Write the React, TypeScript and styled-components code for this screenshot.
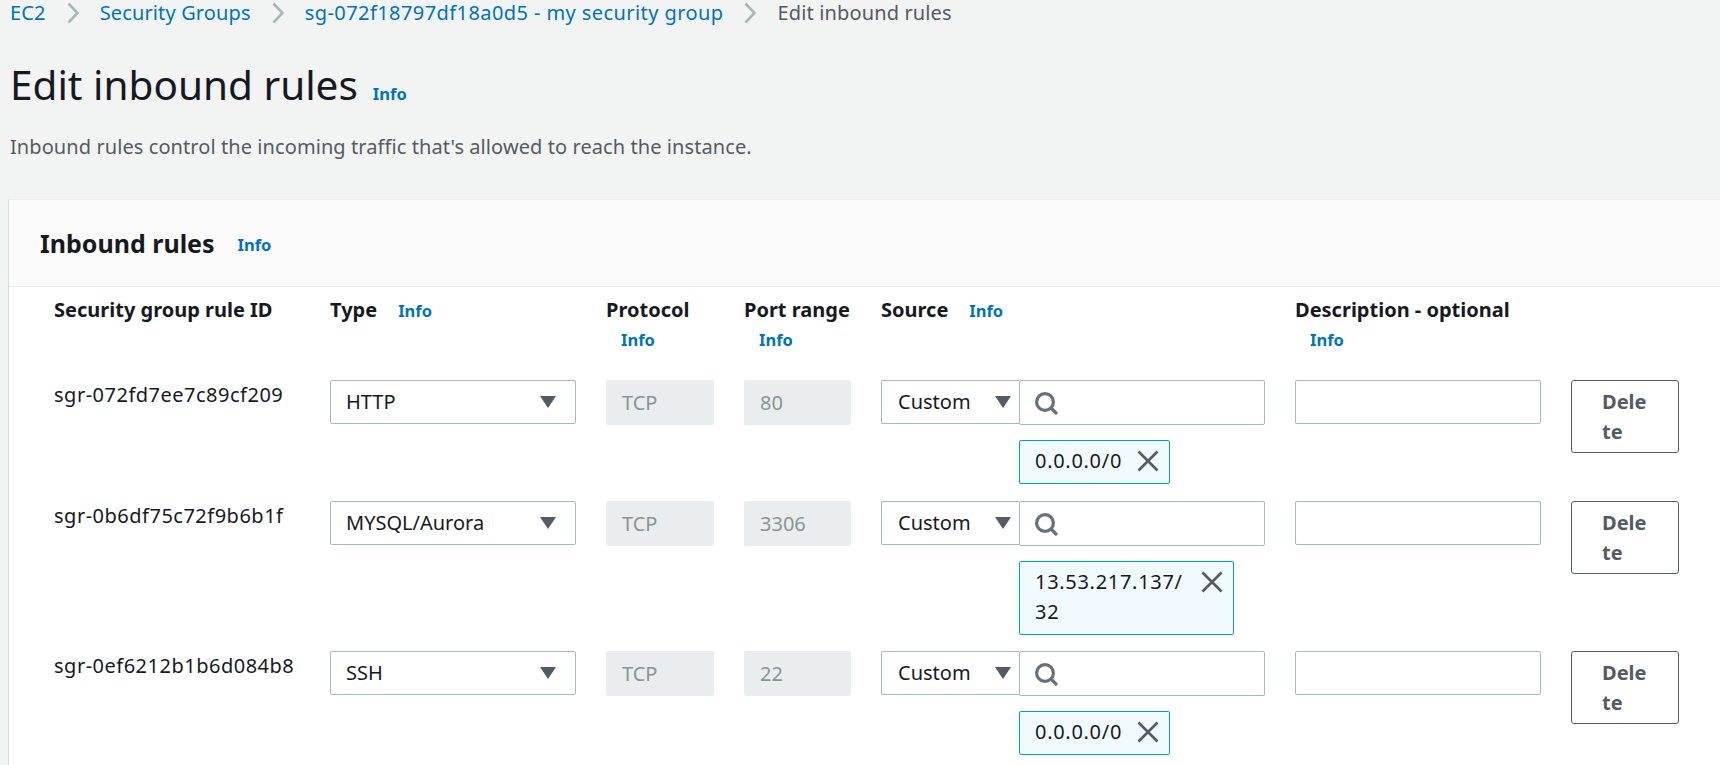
import React from 'react';
import styled, { createGlobalStyle } from 'styled-components';

const GlobalStyle = createGlobalStyle`
html, body {
  margin: 0;
  padding: 0;
  height: 100%;
  overflow: hidden;
  background: #f2f3f3;
}
body {
  font-family: "Noto Sans", "Open Sans", sans-serif;
  font-size: 20px;
  line-height: 30px;
  color: #16191f;
}
`;

const Page = styled.div`
  height: 765px;
  overflow: hidden;
  padding-left: 8px;
`;

const Breadcrumbs = styled.nav`
  display: flex;
  align-items: center;
  height: 26px;
  padding-left: 2px;
  letter-spacing: 0.14px;
`;

const Crumb = styled.a<{ $current?: boolean; $tracked?: boolean }>`
  color: ${({ $current }) => ($current ? '#545b64' : '#0073bb')};
  letter-spacing: ${({ $tracked }) => ($tracked ? '0.42px' : 'inherit')};
  white-space: nowrap;
`;

const CrumbSep = styled.svg`
  width: 12px;
  height: 22px;
  margin: 0 21px;
  fill: none;
  stroke: #aab7b8;
  stroke-width: 2.6;
`;

const TitleRow = styled.div`
  display: flex;
  align-items: baseline;
  margin-top: 33px;
  padding-left: 2px;
`;

const Title = styled.h1`
  margin: 0;
  font-size: 40.5px;
  font-weight: 400;
  line-height: 52px;
`;

const Info = styled.a`
  color: #0073bb;
  font-size: 16.5px;
  font-weight: 700;
  line-height: 30px;
`;

const TitleInfo = styled(Info)`
  margin-left: 15px;
`;

const Lead = styled.p`
  margin: 21px 0 0;
  padding-left: 2px;
  color: #545b64;
  letter-spacing: 0.08px;
`;

const Card = styled.section`
  margin-top: 37px;
  background: #fff;
  border-left: 1px solid #d5dbdb;
  border-top: 1px solid #eaeded;
  padding-bottom: 30px;
`;

const CardHeader = styled.header`
  display: flex;
  align-items: center;
  height: 86px;
  padding-left: 31px;
  background: #fafafa;
  border-bottom: 1px solid #eaeded;
`;

const CardTitle = styled.h2`
  margin: 0;
  font-size: 25px;
  font-weight: 700;
`;

const CardInfo = styled(Info)`
  margin-left: 23px;
  margin-top: 4px;
`;

const Grid = styled.div`
  display: grid;
  grid-template-columns: 246px 246px 108px 107px 384px 246px 108px;
  column-gap: 30px;
  padding-left: 45px;
`;

const HeadCell = styled.div`
  font-weight: 700;
  min-height: 93px;
  padding-top: 8px;
  box-sizing: border-box;
`;

const HeadInfo = styled(Info)<{ $below?: boolean }>`
  margin-left: ${({ $below }) => ($below ? '15px' : '21px')};
  display: ${({ $below }) => ($below ? 'block' : 'inline')};
`;

const RuleId = styled.div`
  letter-spacing: 0.5px;
  white-space: nowrap;
`;

const Control = styled.div`
  display: flex;
  align-items: center;
  box-sizing: border-box;
  height: 44px;
  padding: 0 15px;
  background: #fff;
  border: 1px solid #aab7b8;
  border-radius: 2px;
`;

const SelectBox = styled(Control)`
  justify-content: space-between;
  padding-right: 19px;
`;

const ReadOnly = styled.div`
  display: flex;
  align-items: center;
  box-sizing: border-box;
  height: 45px;
  padding: 0 16px;
  background: #eaeded;
  color: #879596;
  border-radius: 2px;
`;

const Caret = styled.svg`
  width: 16px;
  height: 12px;
  fill: #545b64;
  flex: none;
`;

const SourceCell = styled.div`
  display: grid;
  grid-template-columns: 138px 246px;
  align-items: start;
`;

const CustomSelect = styled(SelectBox)`
  border-right: 0;
  padding-left: 16px;
  padding-right: 8px;
  border-radius: 2px 0 0 2px;
`;

const SearchBox = styled(Control)`
  height: 45px;
  padding-left: 14px;
`;

const SearchIcon = styled.svg`
  width: 24px;
  height: 24px;
  fill: none;
  stroke: #687078;
  stroke-width: 3.2;
`;

const Tag = styled.div`
  grid-column: 2;
  display: flex;
  align-items: flex-start;
  box-sizing: border-box;
  width: fit-content;
  max-width: 215px;
  margin-top: 15px;
  padding: 5px 9px 7px 15px;
  background: #f1faff;
  border: 1px solid #00a1c9;
  border-radius: 2px;
  letter-spacing: 0.7px;
  overflow-wrap: anywhere;
`;

const TagClose = styled.svg`
  width: 24px;
  height: 24px;
  margin: 3px 0 0 14px;
  flex: none;
  fill: none;
  stroke: #545b64;
  stroke-width: 2.6;
`;

const DeleteButton = styled.button`
  display: block;
  box-sizing: border-box;
  width: 108px;
  height: 73px;
  padding: 5px 30px;
  background: #fff;
  border: 1px solid #545b64;
  border-radius: 3px;
  color: #545b64;
  font: 700 20px/30px "Noto Sans", "Open Sans", sans-serif;
  text-align: left;
  word-break: break-all;
`;

const RowGap = styled.div<{ $h: number }>`
  grid-column: 1 / -1;
  height: ${({ $h }) => $h}px;
`;

const rules = [
  { id: 'sgr-072fd7ee7c89cf209', type: 'HTTP', port: '80', net: '0.0.0.0/', mask: '0', gap: 17 },
  { id: 'sgr-0b6df75c72f9b6b1f', type: 'MYSQL/Aurora', port: '3306', net: '13.53.217.137/', mask: '32', gap: 16 },
  { id: 'sgr-0ef6212b1b6d084b8', type: 'SSH', port: '22', net: '0.0.0.0/', mask: '0', gap: 17 },
];

const Separator = () => (
  <CrumbSep viewBox="0 0 12 22">
    <path d="M1.5 1.5l9 9.5-9 9.5" />
  </CrumbSep>
);

const CaretIcon = () => (
  <Caret viewBox="0 0 16 12">
    <path d="M0 0h16L8 12z" />
  </Caret>
);

export default function App() {
  return (
    <>
      <GlobalStyle />
      <Page>
        <Breadcrumbs>
          <Crumb>EC2</Crumb>
          <Separator />
          <Crumb>Security Groups</Crumb>
          <Separator />
          <Crumb $tracked>sg-072f18797df18a0d5 - my security group</Crumb>
          <Separator />
          <Crumb $current>Edit inbound rules</Crumb>
        </Breadcrumbs>
        <TitleRow>
          <Title>Edit inbound rules</Title>
          <TitleInfo>Info</TitleInfo>
        </TitleRow>
        <Lead>Inbound rules control the incoming traffic that's allowed to reach the instance.</Lead>
        <Card>
          <CardHeader>
            <CardTitle>Inbound rules</CardTitle>
            <CardInfo>Info</CardInfo>
          </CardHeader>
          <Grid>
            <HeadCell>Security group rule ID</HeadCell>
            <HeadCell>Type<HeadInfo>Info</HeadInfo></HeadCell>
            <HeadCell>Protocol<HeadInfo $below>Info</HeadInfo></HeadCell>
            <HeadCell>Port range<HeadInfo $below>Info</HeadInfo></HeadCell>
            <HeadCell>Source<HeadInfo>Info</HeadInfo></HeadCell>
            <HeadCell>Description - optional<HeadInfo $below>Info</HeadInfo></HeadCell>
            <HeadCell />
            {rules.map((rule) => (
              <React.Fragment key={rule.id}>
                <RuleId>{rule.id}</RuleId>
                <div>
                  <SelectBox>
                    {rule.type}
                    <CaretIcon />
                  </SelectBox>
                </div>
                <div><ReadOnly>TCP</ReadOnly></div>
                <div><ReadOnly>{rule.port}</ReadOnly></div>
                <SourceCell>
                  <CustomSelect>
                    Custom
                    <CaretIcon />
                  </CustomSelect>
                  <SearchBox>
                    <SearchIcon viewBox="0 0 24 24">
                      <circle cx="11" cy="11" r="8.4" />
                      <path d="M17 17l6 6" />
                    </SearchIcon>
                  </SearchBox>
                  <Tag>
                    <span>{rule.net}<wbr />{rule.mask}</span>
                    <TagClose viewBox="0 0 24 24">
                      <path d="M2.5 2.5l19 19M21.5 2.5l-19 19" />
                    </TagClose>
                  </Tag>
                </SourceCell>
                <div><Control /></div>
                <div><DeleteButton>Delete</DeleteButton></div>
                <RowGap $h={rule.gap} />
              </React.Fragment>
            ))}
          </Grid>
        </Card>
      </Page>
    </>
  );
}
